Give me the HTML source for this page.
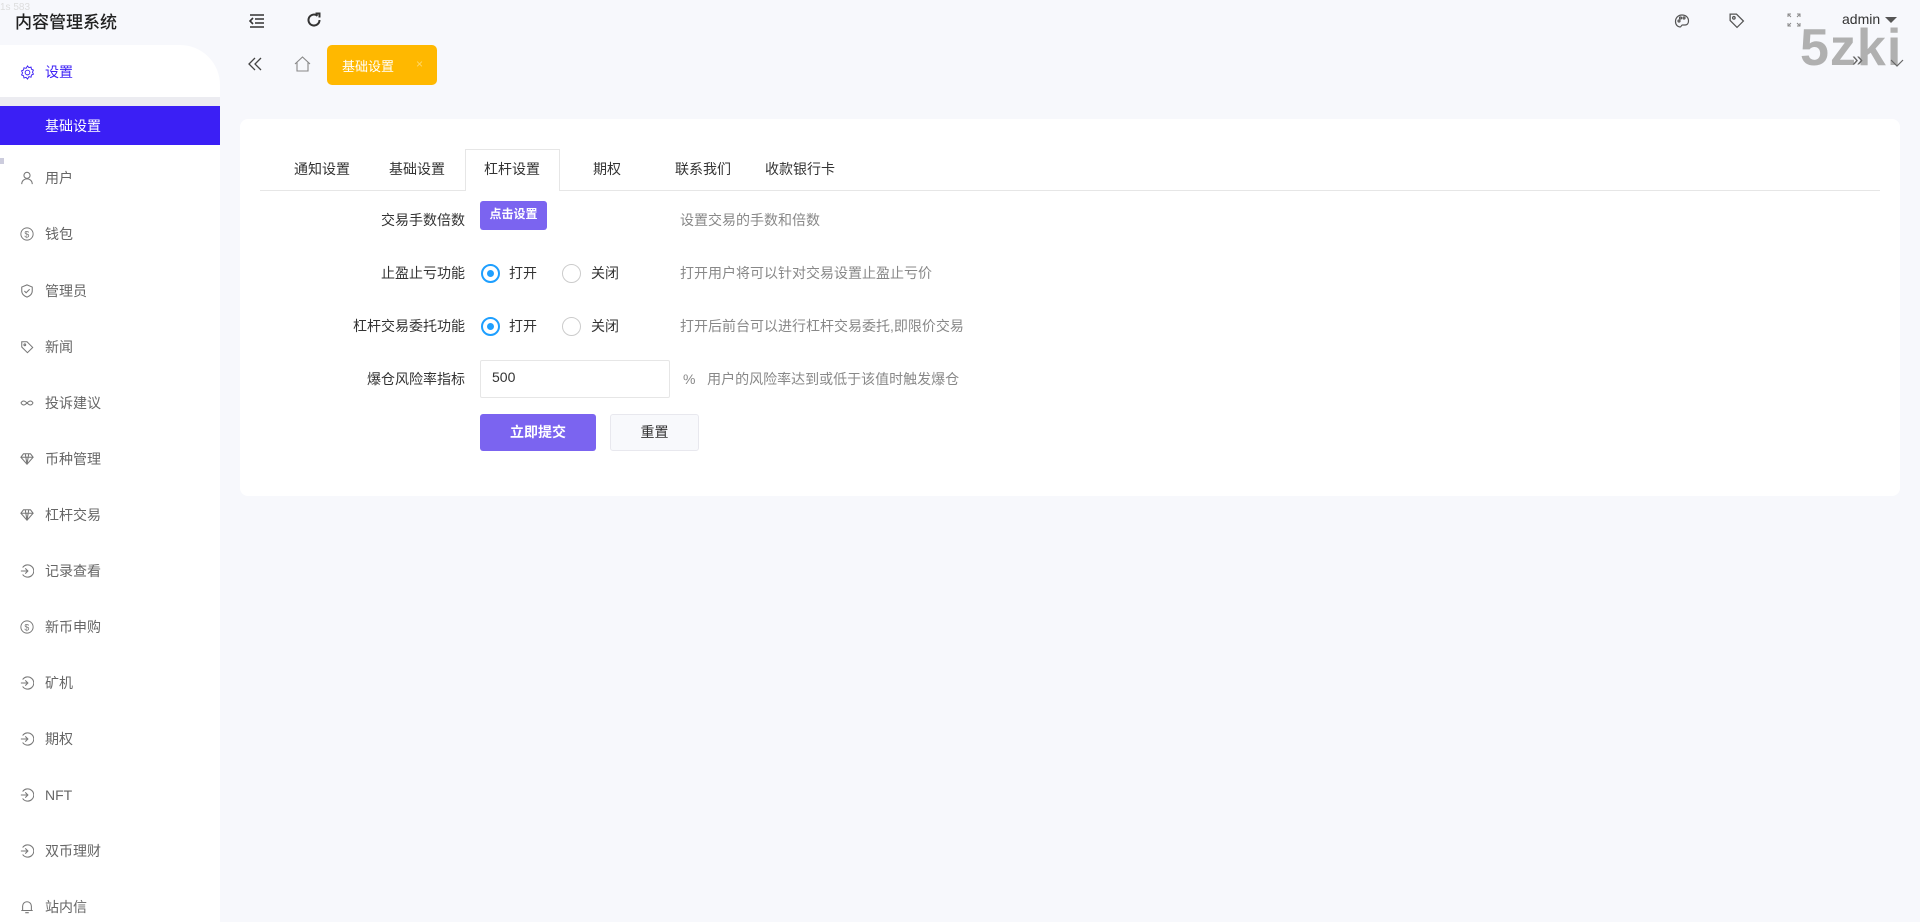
<!DOCTYPE html>
<html><head><meta charset="utf-8"><style>
*{margin:0;padding:0;box-sizing:border-box}
body{width:1920px;height:922px;overflow:hidden;background:#f7f8fc;font-family:"Liberation Sans","Noto Sans CJK SC",sans-serif;position:relative;color:#333}
.a{position:absolute;white-space:nowrap}
.side{position:absolute;left:0;top:45px;width:220px;height:877px;background:#fff;border-top-right-radius:40px}
.mi{position:absolute;left:0;width:220px;height:20px;font-size:14px;color:#666;line-height:20px}
.mi span{position:absolute;left:45px}
.mi svg{position:absolute;left:20px;top:3px}
.lbl{position:absolute;right:1455px;font-size:14px;color:#333;text-align:right}
.help{position:absolute;font-size:14px;color:#888}
.radio{position:absolute;width:19px;height:19px;border-radius:50%;border:1px solid #ccc;background:#fff}
.radio.on{border:2px solid #1e9fff}
.radio.on::after{content:"";position:absolute;left:4px;top:4px;width:7px;height:7px;border-radius:50%;background:#1e9fff}
.tab{position:absolute;top:149px;height:41px;line-height:41px;font-size:14px;color:#333;text-align:center}
</style></head><body>
<div class="a" style="left:0;top:2px;font-size:10px;color:#ddd">1s 583</div>
<div class="a" style="left:15px;top:8px;font-size:17px;color:#222;font-weight:500">内容管理系统</div>
<!-- header icons -->
<svg class="a" style="left:249px;top:13px" width="16" height="16" viewBox="0 0 16 16" fill="none" stroke="#333" stroke-width="1.6"><path d="M1 2h14M6 6h9M6 10h9M1 14h14M4 5L1 8l3 3"/></svg>
<svg class="a" style="left:306px;top:12px" width="16" height="16" viewBox="0 0 16 16" fill="none" stroke="#333" stroke-width="2"><path d="M13.5 8A5.5 5.5 0 1 1 11.5 3.8"/><path d="M9.5 1.5h4v4" /></svg>
<svg class="a" style="left:1674px;top:13px" width="16" height="16" viewBox="0 0 16 16" fill="none" stroke="#555" stroke-width="1.2"><path d="M8 2C4 2 1.5 5 1.5 8.5S4 14 6 14c1.5 0 1-2 2.5-2H11c2.5 0 3.5-2 3.5-4C14.5 4.5 12 2 8 2z"/><circle cx="5" cy="8" r="1"/><circle cx="6.5" cy="5" r="1"/><circle cx="10" cy="5" r="1"/></svg>
<svg class="a" style="left:1728px;top:12px" width="17" height="17" viewBox="0 0 16 16" fill="none" stroke="#555" stroke-width="1.2"><path d="M2 2h6l6.5 6.5-6 6L2 8z"/><circle cx="5.5" cy="5.5" r="1.2"/></svg>
<svg class="a" style="left:1787px;top:13px" width="14" height="14" viewBox="0 0 14 14" fill="none" stroke="#888" stroke-width="1"><path d="M1 4V1h3M10 1h3v3M13 10v3h-3M4 13H1v-3M1 1l3 3M13 1l-3 3M13 13l-3-3M1 13l3-3"/></svg>
<div class="a" style="left:1842px;top:11px;font-size:14px;color:#333">admin</div>
<div class="a" style="left:1885px;top:17px;width:0;height:0;border-left:6px solid transparent;border-right:6px solid transparent;border-top:6px solid #555"></div>
<div class="a" style="left:1800px;top:18px;font-size:52px;font-weight:bold;color:#b0b0b0;letter-spacing:1px">5zki</div>
<div class="a" style="left:1852px;top:49px;font-size:20px;color:#666">»</div>
<svg class="a" style="left:1890px;top:58px" width="14" height="10" viewBox="0 0 14 10" fill="none" stroke="#666" stroke-width="1.2"><path d="M1 2l6 6 6-6"/></svg>

<!-- sidebar -->
<div class="side"></div>
<div class="a" style="left:0;top:97px;width:220px;height:48px;background:#ececf1"></div>
<div class="a" style="left:0;top:106px;width:220px;height:39px;background:#3b1ff5"></div>
<div class="a" style="left:45px;top:116px;font-size:14px;color:#fff">基础设置</div>
<div class="a" style="left:0;top:158px;width:4px;height:6px;background:#ccd"></div>
<div class="mi" style="top:62px;color:#3b1ff5"><svg width="15" height="15" viewBox="0 0 16 16" fill="none" stroke="#3b1ff5" stroke-width="1"><circle cx="8" cy="8" r="2.5"/><path d="M8 1l1.5 1.8 2.3-.6.4 2.3 2.1 1-1 2.1 1 2.1-2.1 1-.4 2.3-2.3-.6L8 15l-1.5-1.8-2.3.6-.4-2.3-2.1-1 1-2.1-1-2.1 2.1-1 .4-2.3 2.3.6z"/></svg><span>设置</span></div>
<div class="mi" style="top:168px"><svg width="14" height="14" viewBox="0 0 16 16" fill="none" stroke="#777" stroke-width="1.2"><circle cx="8" cy="5" r="3.5"/><path d="M2 15c0-4 3-6 6-6s6 2 6 6"/></svg><span>用户</span></div>
<div class="mi" style="top:224px"><svg width="14" height="14" viewBox="0 0 16 16" fill="none" stroke="#777" stroke-width="1.1"><circle cx="8" cy="8" r="7"/><text x="5" y="12" font-size="10" fill="#777" stroke="none">$</text></svg><span>钱包</span></div>
<div class="mi" style="top:281px"><svg width="14" height="14" viewBox="0 0 16 16" fill="none" stroke="#777" stroke-width="1.2"><path d="M8 1l6 2.5V8c0 3.5-3 6-6 7-3-1-6-3.5-6-7V3.5z"/><path d="M5 8l2 2 4-4"/></svg><span>管理员</span></div>
<div class="mi" style="top:337px"><svg width="14" height="14" viewBox="0 0 16 16" fill="none" stroke="#777" stroke-width="1.2"><path d="M2 2h6l6.5 6.5-6 6L2 8z"/><circle cx="5.5" cy="5.5" r="1"/></svg><span>新闻</span></div>
<div class="mi" style="top:393px"><svg width="14" height="14" viewBox="0 0 16 16" fill="none" stroke="#777" stroke-width="1.2"><path d="M1 8c2-3 4-3 7 0s5 3 7 0M1 8c2 3 4 3 7 0s5-3 7 0"/></svg><span>投诉建议</span></div>
<div class="mi" style="top:449px"><svg width="14" height="14" viewBox="0 0 16 16" fill="none" stroke="#777" stroke-width="1.2"><path d="M4 2h8l3 4-7 8-7-8zM1 6h14M6 2l2 12M10 2l-2 12"/></svg><span>币种管理</span></div>
<div class="mi" style="top:505px"><svg width="14" height="14" viewBox="0 0 16 16" fill="none" stroke="#777" stroke-width="1.2"><path d="M4 2h8l3 4-7 8-7-8zM1 6h14M6 2l2 12M10 2l-2 12"/></svg><span>杠杆交易</span></div>
<div class="mi" style="top:561px"><svg width="14" height="14" viewBox="0 0 16 16" fill="none" stroke="#777" stroke-width="1.2"><path d="M3 4a7 7 0 1 1 0 8M1 8h8M6 5l3 3-3 3"/></svg><span>记录查看</span></div>
<div class="mi" style="top:617px"><svg width="14" height="14" viewBox="0 0 16 16" fill="none" stroke="#777" stroke-width="1.1"><circle cx="8" cy="8" r="7"/><text x="5" y="12" font-size="10" fill="#777" stroke="none">$</text></svg><span>新币申购</span></div>
<div class="mi" style="top:673px"><svg width="14" height="14" viewBox="0 0 16 16" fill="none" stroke="#777" stroke-width="1.2"><path d="M3 4a7 7 0 1 1 0 8M1 8h8M6 5l3 3-3 3"/></svg><span>矿机</span></div>
<div class="mi" style="top:729px"><svg width="14" height="14" viewBox="0 0 16 16" fill="none" stroke="#777" stroke-width="1.2"><path d="M3 4a7 7 0 1 1 0 8M1 8h8M6 5l3 3-3 3"/></svg><span>期权</span></div>
<div class="mi" style="top:785px"><svg width="14" height="14" viewBox="0 0 16 16" fill="none" stroke="#777" stroke-width="1.2"><path d="M3 4a7 7 0 1 1 0 8M1 8h8M6 5l3 3-3 3"/></svg><span>NFT</span></div>
<div class="mi" style="top:841px"><svg width="14" height="14" viewBox="0 0 16 16" fill="none" stroke="#777" stroke-width="1.2"><path d="M3 4a7 7 0 1 1 0 8M1 8h8M6 5l3 3-3 3"/></svg><span>双币理财</span></div>
<div class="mi" style="top:897px"><svg width="14" height="14" viewBox="0 0 16 16" fill="none" stroke="#777" stroke-width="1.2"><path d="M3 12V7a5 5 0 0 1 10 0v5zM1.5 12h13M6 14.5h4"/></svg><span>站内信</span></div>

<!-- tag bar -->
<svg class="a" style="left:248px;top:57px" width="14" height="14" viewBox="0 0 14 14" fill="none" stroke="#444" stroke-width="1.3"><path d="M7 1L1 7l6 6M13 1L7 7l6 6"/></svg>
<svg class="a" style="left:294px;top:56px" width="17" height="16" viewBox="0 0 17 16" fill="none" stroke="#888" stroke-width="1.1"><path d="M1 8L8.5 1 16 8M3 6.5V15h11V6.5"/></svg>
<div class="a" style="left:327px;top:45px;width:110px;height:40px;background:#ffb800;border-radius:5px"></div>
<div class="a" style="left:342px;top:56px;font-size:13px;color:#fff">基础设置</div>
<div class="a" style="left:416px;top:57px;font-size:12px;color:#ffd86a">×</div>

<!-- card -->
<div class="a" style="left:240px;top:119px;width:1660px;height:377px;background:#fff;border-radius:8px"></div>
<div class="a" style="left:260px;top:190px;width:1620px;height:1px;background:#e6e6e6"></div>
<div class="a" style="left:465px;top:149px;width:95px;height:42px;background:#fff;border:1px solid #e6e6e6;border-bottom:none"></div>
<div class="tab" style="left:287px;width:70px">通知设置</div>
<div class="tab" style="left:382px;width:70px">基础设置</div>
<div class="tab" style="left:477px;width:70px">杠杆设置</div>
<div class="tab" style="left:572px;width:70px">期权</div>
<div class="tab" style="left:668px;width:70px">联系我们</div>
<div class="tab" style="left:758px;width:84px">收款银行卡</div>

<div class="lbl" style="top:210px">交易手数倍数</div>
<div class="a" style="left:480px;top:201px;width:67px;height:29px;background:#7b64f0;border-radius:3px;color:#fff;font-size:12px;font-weight:bold;text-align:center;line-height:27px">点击设置</div>
<div class="help" style="left:680px;top:210px">设置交易的手数和倍数</div>

<div class="lbl" style="top:263px">止盈止亏功能</div>
<div class="radio on" style="left:481px;top:264px"></div>
<div class="a" style="left:509px;top:263px;font-size:14px;color:#333">打开</div>
<div class="radio" style="left:562px;top:264px"></div>
<div class="a" style="left:591px;top:263px;font-size:14px;color:#333">关闭</div>
<div class="help" style="left:680px;top:263px">打开用户将可以针对交易设置止盈止亏价</div>

<div class="lbl" style="top:316px">杠杆交易委托功能</div>
<div class="radio on" style="left:481px;top:317px"></div>
<div class="a" style="left:509px;top:316px;font-size:14px;color:#333">打开</div>
<div class="radio" style="left:562px;top:317px"></div>
<div class="a" style="left:591px;top:316px;font-size:14px;color:#333">关闭</div>
<div class="help" style="left:680px;top:316px">打开后前台可以进行杠杆交易委托,即限价交易</div>

<div class="lbl" style="top:369px">爆仓风险率指标</div>
<div class="a" style="left:480px;top:360px;width:190px;height:38px;border:1px solid #e6e6e6;border-radius:2px;background:#fff"></div>
<div class="a" style="left:492px;top:369px;font-size:14px;color:#333">500</div>
<div class="help" style="left:683px;top:369px">%&nbsp;&nbsp;&nbsp;用户的风险率达到或低于该值时触发爆仓</div>

<div class="a" style="left:480px;top:414px;width:116px;height:37px;background:#7b64f0;border-radius:3px;color:#fff;font-size:14px;font-weight:bold;text-align:center;line-height:37px">立即提交</div>
<div class="a" style="left:610px;top:414px;width:89px;height:37px;background:#f8f9fc;border:1px solid #e8e8ee;border-radius:3px;color:#333;font-size:14px;text-align:center;line-height:35px">重置</div>
</body></html>
